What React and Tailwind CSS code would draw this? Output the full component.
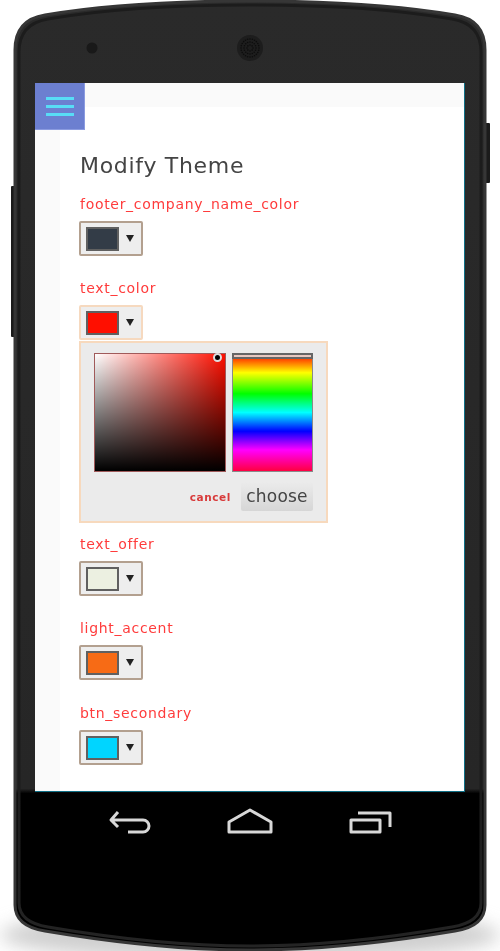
import React from 'react';

function PhoneBody() {
  const dots = [];
  for (let ring = 1; ring <= 3; ring++) {
    const count = ring * 8;
    for (let i = 0; i < count; i++) {
      const a = (i / count) * Math.PI * 2;
      dots.push(<circle key={`${ring}-${i}`} cx={250 + Math.cos(a) * ring * 3} cy={48 + Math.sin(a) * ring * 3} r="0.8" fill="#0d0d0d" />);
    }
  }
  const outline = 'M15 50 C15 28 26 18 45 15 C110 4 180 1 250 1 C320 1 390 4 455 15 C474 18 485 28 485 50 L485 905 C485 920 474 928 455 931 C390 942 320 950 250 950 C180 950 110 942 45 931 C26 928 15 920 15 905 Z';
  return (
    <svg className="absolute left-0 top-0" width="500" height="951" viewBox="0 0 500 951">
      <defs>
        <linearGradient id="body" x1="0" y1="0" x2="0" y2="1">
          <stop offset="0" stopColor="#2a2a2a" />
          <stop offset="0.83" stopColor="#262626" />
          <stop offset="0.835" stopColor="#000000" />
          <stop offset="1" stopColor="#000000" />
        </linearGradient>
        <linearGradient id="rim" x1="0" y1="0" x2="0" y2="1">
          <stop offset="0" stopColor="#1c1c1c" />
          <stop offset="0.83" stopColor="#1c1c1c" />
          <stop offset="1" stopColor="#242424" />
        </linearGradient>
        <filter id="soft" x="-10%" y="-50%" width="120%" height="200%">
          <feGaussianBlur stdDeviation="9" />
        </filter>
      </defs>
      <ellipse cx="250" cy="935" rx="250" ry="26" fill="#cfcfcf" filter="url(#soft)" />
      <rect x="11" y="186" width="4" height="151" rx="1" fill="#1b1b1b" />
      <rect x="485" y="123" width="5" height="60" rx="1" fill="#1b1b1b" />
      <path d={outline} fill="url(#body)" stroke="#363636" strokeWidth="3" />
      <path d="M19 52 C19 32 30 22 48 19 C112 8 180 5 250 5 C320 5 388 8 452 19 C470 22 481 32 481 52 L481 903 C481 917 470 924 452 927 C388 938 320 946 250 946 C180 946 112 938 48 927 C30 924 19 917 19 903 Z" fill="none" stroke="url(#rim)" strokeWidth="3" />
      <circle cx="92" cy="48" r="5.5" fill="#191919" />
      <circle cx="250" cy="48" r="13" fill="#1d1d1d" />
      {dots}
    </svg>
  );
}

function ColorField({ label, color, active }) {
  return (
    <div className="flex flex-col items-start">
      <span className="ml-px h-[20px] whitespace-nowrap text-[14px] leading-[20px] tracking-[0.7px] text-[#ff3b3b]">{label}</span>
      <div className={`mt-[7px] flex h-[35px] w-[64px] items-center rounded-[2px] border-2 bg-[#eeeeee] pl-[5px] ${active ? 'border-[#f6d9bf]' : 'border-[#b3a08f]'}`}>
        <div className="h-[24px] w-[33px] border-2 border-[#606060]" style={{ backgroundColor: color }} />
        <div className="ml-[7px] h-0 w-0 border-x-[4px] border-t-[7px] border-x-transparent border-t-[#222222]" />
      </div>
    </div>
  );
}

function Picker() {
  return (
    <div className="mt-[1px] h-[182px] w-[249px] border-2 border-[#f7d9bd] bg-[#ebebeb] pl-[13px] pr-[13px] pt-[10px]">
      <div className="flex gap-[6px]">
        <div className="relative h-[119px] w-[132px] border border-[#a05a5a] bg-[#ff0f00]">
          <div className="absolute inset-0 bg-[linear-gradient(to_right,#ffffff,rgba(255,255,255,0))]" />
          <div className="absolute inset-0 bg-[linear-gradient(to_top,#000000,rgba(0,0,0,0))]" />
          <div className="absolute right-[3px] top-[-1px] h-[9px] w-[9px] rounded-full border-2 border-[#dddddd] bg-black" />
        </div>
        <div className="relative h-[119px] w-[81px] border border-[#8a8a8a] bg-[linear-gradient(to_bottom,#ff0000_0%,#ffff00_16%,#00ff00_34%,#00ffff_50%,#0000ff_66%,#ff00ff_82%,#ff0040_100%)]">
          <div className="absolute left-[-1px] right-[-1px] top-[-1px] h-[6px] border-2 border-[#666666] bg-[#e8c8c0]" />
        </div>
      </div>
      <div className="mt-[10px] flex items-center justify-end">
        <span className="mr-[10px] mt-[3px] text-[10.5px] font-bold tracking-[0.6px] text-[#d83a3a]">cancel</span>
        <button className="h-[29px] w-[72px] rounded-[2px] bg-[linear-gradient(to_bottom,#ebebeb,#d6d6d6)] text-[17px] tracking-[0.2px] text-[#444444]">choose</button>
      </div>
    </div>
  );
}

function NavIcons() {
  return (
    <div className="flex h-[55px] items-center">
      <svg width="430" height="55" viewBox="35 792 430 55" fill="none" stroke="#d8d8d8" strokeWidth="3" strokeLinejoin="round">
        <path d="M118 812 L111 820 L118 827 M111 820 H143 A6 6 0 0 1 143 832 H128" />
        <path d="M229 822 L250 810 L271 822 V832 H229 Z" />
        <path d="M351 820 H380 V832 H351 Z M358 813 H390 V827" />
      </svg>
    </div>
  );
}

export default function App() {
  return (
    <div className="relative h-[951px] w-[500px] overflow-hidden bg-white font-['DejaVu_Sans',sans-serif]">
      <PhoneBody />
      <div className="relative px-[35px] pt-[83px]">
        <div className="h-[709px] border-b border-r border-[#0f6f86] bg-white">
          <div className="flex h-[24px] bg-[#fafafa]">
            <div className="relative z-10 flex h-[47px] w-[50px] flex-col items-center justify-center gap-[5px] border-b border-r border-[#8b9be0] bg-[#6c7fd0]">
              <div className="h-[3px] w-[28px] bg-[#58dcf6]" />
              <div className="h-[3px] w-[28px] bg-[#58dcf6]" />
              <div className="h-[3px] w-[28px] bg-[#58dcf6]" />
            </div>
          </div>
          <div className="flex h-[684px]">
            <div className="w-[25px] pt-[23px]">
              <div className="h-full bg-[#fafafa]" />
            </div>
            <div className="flex-1 pl-[19px] blur-[0.4px]">
              <h1 className="ml-px mt-[45px] text-[22px] leading-[28px] tracking-[0.7px] text-[#444444]">Modify Theme</h1>
              <div className="mt-[14px] flex flex-col items-start">
                <ColorField label="footer_company_name_color" color="#333c47" />
                <div className="mt-[22px]">
                  <ColorField label="text_color" color="#ff0f00" active />
                  <Picker />
                </div>
                <div className="mt-[11px]">
                  <ColorField label="text_offer" color="#ecf0e1" />
                </div>
                <div className="mt-[22px]">
                  <ColorField label="light_accent" color="#f76b15" />
                </div>
                <div className="mt-[23px]">
                  <ColorField label="btn_secondary" color="#00d5ff" />
                </div>
              </div>
            </div>
          </div>
        </div>
        <NavIcons />
      </div>
    </div>
  );
}
